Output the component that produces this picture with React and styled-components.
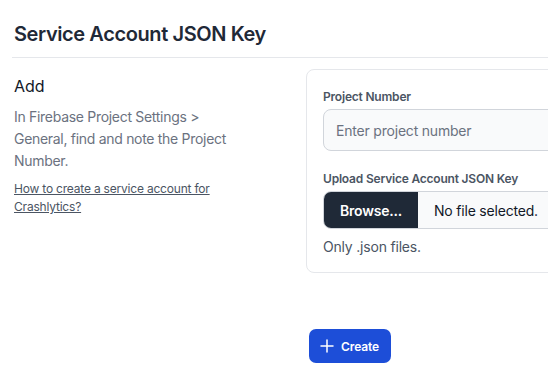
import React from 'react';
import styled, { createGlobalStyle } from 'styled-components';

const GlobalStyle = createGlobalStyle`
  html, body {
    margin: 0;
    padding: 0;
    background: #ffffff;
    overflow: hidden;
  }
  body {
    font-family: Inter, 'Noto Sans', sans-serif;
    -webkit-font-smoothing: antialiased;
  }
`;

const Page = styled.div`
  width: 700px;
  padding: 22px 0 0 12px;
`;

const Title = styled.h2`
  margin: 0;
  padding: 0 0 11px 2px;
  font-size: 20px;
  line-height: 24px;
  font-weight: 600;
  color: #1f2937;
  border-bottom: 1px solid #e5e7eb;
  letter-spacing: -0.4px;
`;

const Columns = styled.div`
  display: grid;
  grid-template-columns: 280px 1fr;
  gap: 14px;
  padding-top: 11px;
`;

const Info = styled.div`
  padding: 6px 0 0 2px;
`;

const SubTitle = styled.h3`
  margin: 0 0 9px;
  font-size: 16px;
  line-height: 22px;
  font-weight: 400;
  color: #111827;
`;

const Text = styled.p`
  margin: 0 0 8px;
  font-size: 14px;
  line-height: 22px;
  color: #6b7280;
  letter-spacing: -0.3px;
  max-width: 230px;
`;

const HelpLink = styled.a`
  display: block;
  font-size: 12px;
  line-height: 18px;
  color: #4b5563;
  text-decoration: underline;
  letter-spacing: -0.2px;
  max-width: 210px;
`;

const Card = styled.div`
  border: 1px solid #e5e7eb;
  border-radius: 8px;
  padding: 19px 16px 15px;
  width: 400px;
  box-sizing: border-box;
`;

const Field = styled.div`
  margin-bottom: ${(props) => props.gap || 0}px;
`;

const Label = styled.label`
  display: block;
  font-size: 12px;
  line-height: 16px;
  font-weight: 600;
  color: #4b5563;
  letter-spacing: -0.2px;
  margin-bottom: 4px;
`;

const Input = styled.input`
  display: block;
  width: 100%;
  box-sizing: border-box;
  height: 42px;
  padding: 0 12px;
  border: 1px solid #d1d5db;
  border-radius: 8px;
  background: #f9fafb;
  font-family: inherit;
  font-size: 14px;
  letter-spacing: -0.2px;
  color: #111827;
  outline: none;

  &::placeholder {
    color: #6b7280;
  }
`;

const FileBox = styled.div`
  display: flex;
  height: 38px;
  border: 1px solid #d1d5db;
  border-radius: 8px;
  overflow: hidden;
  background: #f9fafb;
  box-sizing: border-box;
`;

const BrowseButton = styled.button`
  width: 94px;
  border: none;
  background: #1f2937;
  color: #ffffff;
  font-family: inherit;
  font-size: 14px;
  font-weight: 600;
  letter-spacing: -0.2px;
  cursor: pointer;
`;

const FileName = styled.span`
  display: flex;
  align-items: center;
  padding-left: 16px;
  font-size: 14px;
  letter-spacing: -0.2px;
  color: #111827;
`;

const Hint = styled.p`
  margin: 8px 0 0;
  font-size: 14px;
  line-height: 20px;
  letter-spacing: -0.2px;
  color: #4b5563;
`;

const Footer = styled.div`
  padding: 56px 0 0 297px;
`;

const CreateButton = styled.button`
  display: inline-flex;
  align-items: center;
  gap: 7px;
  height: 34px;
  padding: 0 12px 0 11px;
  border: none;
  border-radius: 7px;
  background: #1d4ed8;
  color: #ffffff;
  font-family: inherit;
  font-size: 12px;
  font-weight: 600;
  letter-spacing: -0.1px;
  cursor: pointer;
`;

const PlusIcon = () => (
  <svg width="14" height="14" viewBox="0 0 14 14" fill="none">
    <path d="M7 1v12M1 7h12" stroke="#fff" strokeWidth="1.5" strokeLinecap="round" />
  </svg>
);

export default function App() {
  return (
    <>
      <GlobalStyle />
      <Page>
        <Title>Service Account JSON Key</Title>
        <Columns>
          <Info>
            <SubTitle>Add</SubTitle>
            <Text>In Firebase Project Settings &gt; General, find and note the Project Number.</Text>
            <HelpLink href="#">How to create a service account for Crashlytics?</HelpLink>
          </Info>
          <Card>
            <Field gap={20}>
              <Label htmlFor="projectNumber">Project Number</Label>
              <Input id="projectNumber" type="text" placeholder="Enter project number" />
            </Field>
            <Field>
              <Label>Upload Service Account JSON Key</Label>
              <FileBox>
                <BrowseButton type="button">Browse...</BrowseButton>
                <FileName>No file selected.</FileName>
              </FileBox>
              <Hint>Only .json files.</Hint>
            </Field>
          </Card>
        </Columns>
        <Footer>
          <CreateButton type="button">
            <PlusIcon />
            Create
          </CreateButton>
        </Footer>
      </Page>
    </>
  );
}
